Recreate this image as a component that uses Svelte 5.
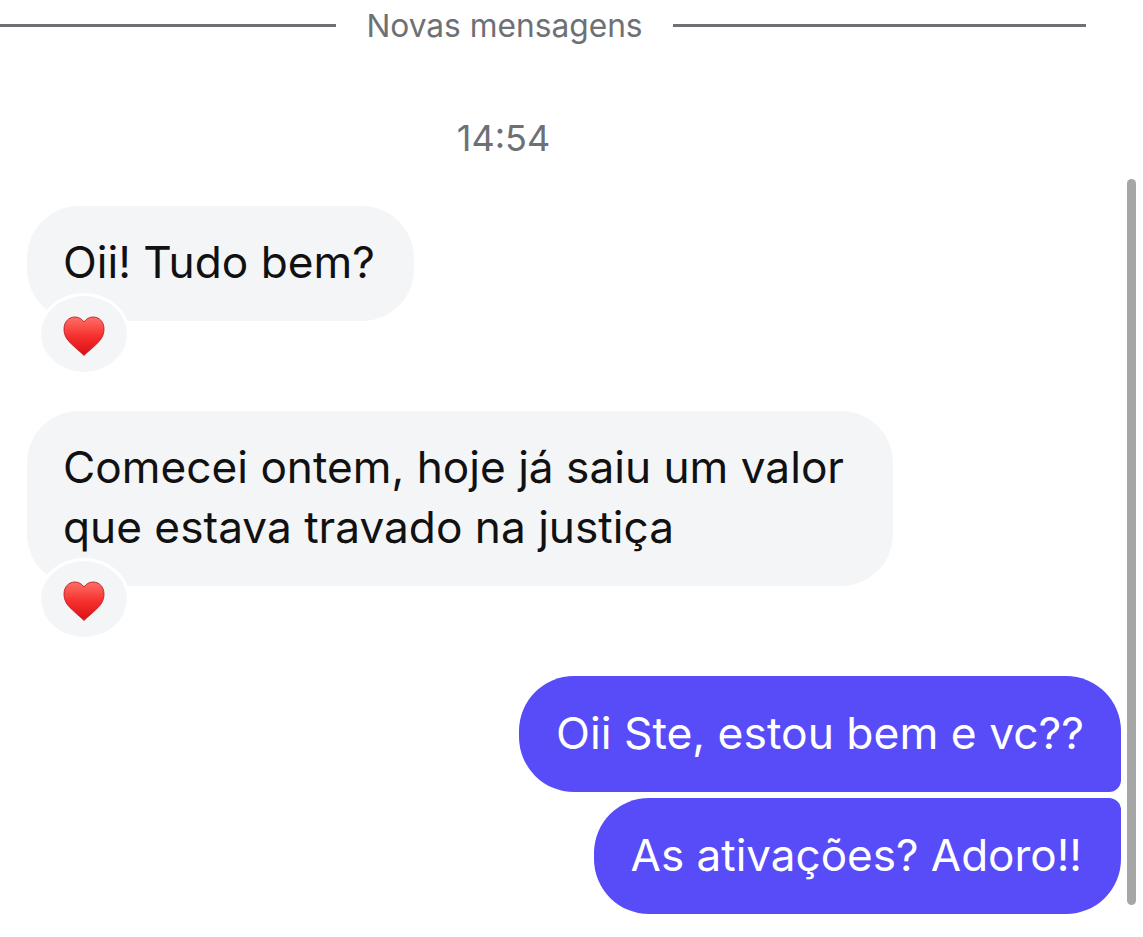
<script lang="ts">
    const messages = [
        { id: 1, text: "Oii! Tudo bem?", reaction: true },
        { id: 2, text: "Comecei ontem, hoje já saiu um valor que estava travado na justiça", reaction: true },
    ];
    const replies = [
        { id: 3, text: "Oii Ste, estou bem e vc??", cls: "first" },
        { id: 4, text: "As ativações? Adoro!!", cls: "last" },
    ];
</script>

<main class="chat">
    <div class="divider">
        <span class="line left"></span>
        <span class="divider-label">Novas mensagens</span>
        <span class="line right"></span>
    </div>

    <div class="time">14:54</div>

    <div class="incoming">
        {#each messages as msg (msg.id)}
            <div class="msg">
                <div class="bubble">{msg.text}</div>
                {#if msg.reaction}
                    <div class="reaction">
                        <svg width="42" height="40" viewBox="0 0 42 40" aria-hidden="true">
                            <defs>
                                <linearGradient id="heart-{msg.id}" x1="0" y1="0" x2="0" y2="1">
                                    <stop offset="0" stop-color="#ff6f66" />
                                    <stop offset="0.5" stop-color="#f5302e" />
                                    <stop offset="1" stop-color="#dc0f14" />
                                </linearGradient>
                            </defs>
                            <path
                                d="M21 39.500 C19.500 37.500 14 33.500 9 28.500 C3.500 23.500 1 19 1 13 C1 5.500 6 1 12 1 C15.800 1 19 3 21 6 C23 3 26.200 1 30 1 C36 1 41 5.500 41 13 C41 19 38.500 23.500 33 28.500 C28 33.500 22.500 37.500 21 39.500 Z"
                                fill="url(#heart-{msg.id})"
                                stroke="#b5121b"
                                stroke-width="0.8"
                            />
                        </svg>
                    </div>
                {/if}
            </div>
        {/each}
    </div>

    <div class="outgoing">
        {#each replies as reply (reply.id)}
            <div class="bubble-out {reply.cls}">{reply.text}</div>
        {/each}
    </div>

    <div class="scrollbar"></div>
</main>

<style>
    :global(body) {
        margin: 0;
        background: #fff;
    }

    .chat {
        position: relative;
        width: 1143px;
        height: 937px;
        overflow: hidden;
        font-family: Inter, "Liberation Sans", sans-serif;
    }

    .divider {
        display: flex;
        align-items: center;
        height: 50px;
        width: 1086px;
    }

    .line {
        height: 3px;
        background: #6d7175;
    }

    .line.left {
        width: 336px;
    }

    .line.right {
        flex: 1;
    }

    .divider-label {
        width: 337px;
        text-align: center;
        font-size: 31.700px;
        color: #6d7175;
        white-space: nowrap;
    }

    .time {
        margin-top: 66px;
        width: 1007px;
        text-align: center;
        font-size: 36px;
        line-height: 44px;
        color: #6d7175;
    }

    .incoming {
        display: flex;
        flex-direction: column;
        gap: 39px;
        margin-top: 46px;
        padding-left: 27px;
    }

    .msg {
        display: flex;
        flex-direction: column;
        align-items: flex-start;
    }

    .bubble {
        box-sizing: border-box;
        width: fit-content;
        max-width: 866px;
        background: #f4f5f7;
        border-radius: 52px;
        padding: 26px 39px 29px 36px;
        font-size: 44.200px;
        line-height: 60px;
        color: #111;
    }

    .reaction {
        display: flex;
        align-items: center;
        justify-content: center;
        box-sizing: border-box;
        width: 86px;
        height: 76px;
        padding-top: 3px;
        margin: -25px 0 0 14px;
        background: #f4f5f7;
        border-radius: 50%;
        box-shadow: 0 0 0 3px #fff;
        position: relative;
    }

    .outgoing {
        display: flex;
        flex-direction: column;
        align-items: flex-end;
        gap: 6px;
        margin-top: 39px;
        padding-right: 22px;
    }

    .bubble-out {
        display: flex;
        align-items: center;
        height: 116px;
        box-sizing: border-box;
        padding: 0 37px 2px;
        background: #574cf8;
        color: #fff;
        font-size: 44.400px;
        white-space: nowrap;
    }

    .bubble-out.first {
        border-radius: 55px 55px 12px 55px;
    }

    .bubble-out.last {
        padding-right: 39px;
        font-size: 44px;
        border-radius: 55px 12px 55px 55px;
    }

    .scrollbar {
        position: absolute;
        left: 1127px;
        top: 179px;
        width: 9px;
        height: 726px;
        background: #a6a6a6;
        border-radius: 5px;
    }
</style>
